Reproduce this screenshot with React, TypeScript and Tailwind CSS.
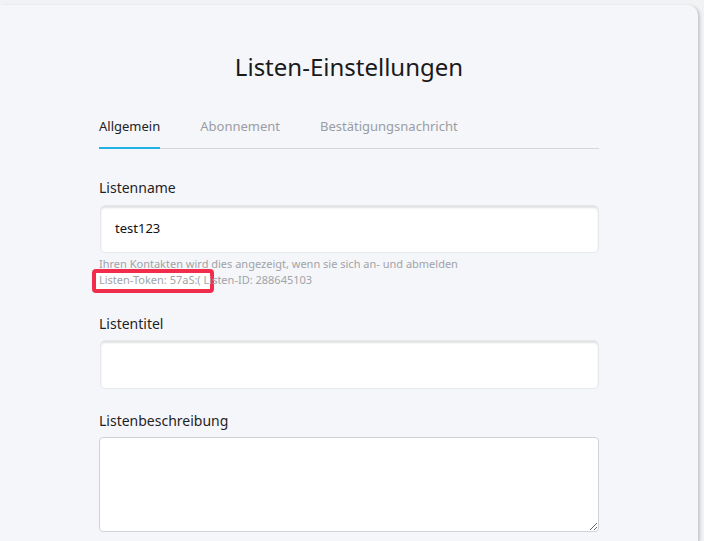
import React from "react";

const tabs = ["Allgemein", "Abonnement", "Bestätigungsnachricht"];

const App = () => {
  return (
    <div
      className="h-[541px] w-[704px] overflow-hidden bg-[#f1f2f4] pt-[5px] pr-[6px]"
      style={{ fontFamily: '"Noto Sans", "Open Sans", sans-serif' }}
    >
      <div className="h-full rounded-tr-[10px] bg-[#f5f6fa] shadow-[2px_1px_3px_rgba(0,0,0,0.18)] pt-[42px]">
        <div className="ml-[99px] w-[500px]">
          <h1 className="text-center text-[24px] leading-[40px] text-[#1a1a1a]">
            Listen-Einstellungen
          </h1>

          {/* Tabs */}
          <div className="mt-[29px] flex gap-[40px] border-b border-[#d3d6db]">
            {tabs.map((t, i) => (
              <div
                key={t}
                className={`pb-[11px] text-[13px] leading-[20px] ${
                  i === 0
                    ? "-mb-px border-b-2 border-[#22b2e6] text-[#222]"
                    : "text-[#9a9da3]"
                }`}
              >
                {t}
              </div>
            ))}
          </div>

          {/* Listenname */}
          <label className="mt-[28px] block text-[14px] leading-[22px] text-[#1f1f1f]">
            Listenname
          </label>
          <div className="mt-[6px] ml-px flex h-[48px] items-center rounded-[5px] border border-[#e6e8ec] bg-white px-[14px] text-[13px] text-[#111] shadow-[inset_0_2px_2px_rgba(0,0,0,0.12)]">
            test123
          </div>
          <div className="relative mt-[3px] text-[11px] leading-[16px] text-[#a0a3a8]">
            <div className="absolute left-[-7px] top-[13px] h-[24px] w-[122px] rounded-[4px] border-[4px] border-[#f22d4b] bg-white" />
            <p className="relative">Ihren Kontakten wird dies angezeigt, wenn sie sich an- und abmelden</p>
            <p className="relative">Listen-Token: 57aS:( Listen-ID: 288645103</p>
          </div>

          {/* Listentitel */}
          <label className="mt-[25px] block text-[14px] leading-[22px] text-[#1f1f1f]">
            Listentitel
          </label>
          <div className="mt-[5px] ml-px h-[49px] rounded-[5px] border border-[#e6e8ec] bg-white shadow-[inset_0_2px_2px_rgba(0,0,0,0.12)]" />

          {/* Listenbeschreibung */}
          <label className="mt-[21px] block text-[14px] leading-[22px] text-[#1f1f1f]">
            Listenbeschreibung
          </label>
          <textarea className="mt-[5px] block h-[95px] w-full rounded-[4px] border border-[#cfd2d6] bg-white" />
        </div>
      </div>
    </div>
  );
};

export default App;
